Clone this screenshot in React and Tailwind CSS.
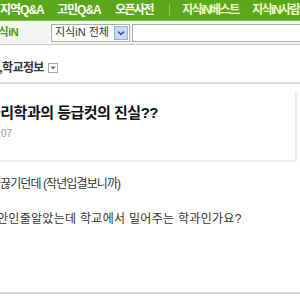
const App = () => {
  return (
    <div className="w-[300px] h-[300px] overflow-hidden bg-white font-['Liberation_Sans','Noto_Sans_CJK_KR',sans-serif]">
      {/* top menu */}
      <div className="h-[21px] bg-[#5ba91b] border-b border-[#7cc23a] flex items-center text-[12px] font-bold text-white whitespace-nowrap tracking-[-1px]">
        <span className="w-[57px] shrink-0">지역Q&amp;A</span>
        <span className="w-[58px] shrink-0">고민Q&amp;A</span>
        <span className="w-[54px] shrink-0 tracking-[-1.5px]">오픈사전</span>
        <span className="w-px h-[12px] bg-[#8fcc55] shrink-0"></span>
        <span className="ml-[12px] w-[70px] shrink-0 text-[#eef8c8] tracking-[-1.5px]">지식iN베스트</span>
        <span className="shrink-0 text-[#eef8c8] tracking-[-1.5px]">지식iN사람들</span>
      </div>

      {/* search row */}
      <div className="h-[24px] bg-[#f4f4f4] border-b border-[#c9c9c9] flex items-center whitespace-nowrap">
        <span className="ml-[-11px] w-[40px] shrink-0 text-[11px] font-bold text-[#4d9a16] tracking-[-0.5px]">지식iN</span>
        <div className="ml-[22px] w-[79px] shrink-0 h-[18px] bg-white border border-[#a7aeb8] flex items-center">
          <span className="flex-1 pl-[3px] text-[11px] text-[#333]">지식iN 전체</span>
          <span className="w-[14px] h-[14px] mr-[1px] bg-[#c9dcf4] border border-[#98b4dd] flex items-center justify-center">
            <svg width="8" height="6" viewBox="0 0 8 6">
              <path d="M1 1.5 L4 4.5 L7 1.5" fill="none" stroke="#2a4f8f" strokeWidth="1.5" />
            </svg>
          </span>
        </div>
        <div className="ml-[2px] flex-1 h-[18px] bg-white border border-[#a7aeb8] mr-[-4px]"></div>
      </div>

      {/* breadcrumb */}
      <div className="h-[39px] pt-[8px] border-b-2 border-[#dcdcdc] flex items-center whitespace-nowrap">
        <span className="ml-[-32px] text-[12px] font-bold text-[#333] tracking-[-0.6px]">대학교,학교정보</span>
        <span className="ml-[4px] w-[10px] h-[10px] border border-[#aaa] flex items-center justify-center">
          <svg width="6" height="4" viewBox="0 0 6 4">
            <path d="M0.5 0.5 L3 3.5 L5.5 0.5 Z" fill="#666" />
          </svg>
        </span>
      </div>

      {/* question card */}
      <div className="mt-[8px] mr-[3px] h-[70px] border-r-2 border-[#ececec] border-b-2 border-b-[#efefef] whitespace-nowrap">
        <div className="pt-[10px] ml-[-13px] text-[15px] font-bold text-[#111] tracking-[-0.5px]">물리학과의 등급컷의 진실??</div>
        <div className="mt-[1px] ml-[-65px] text-[10px] text-[#999]">2011.01.03 16:07</div>
      </div>

      {/* body */}
      <div className="whitespace-nowrap text-[12px] text-[#333]">
        <div className="mt-[13px] tracking-[-0.9px]">끊기던데 (작년입결보니까)</div>
        <div className="mt-[17px] ml-[-3px] tracking-[0.3px]">안인줄알았는데 학교에서 밀어주는 학과인가요?</div>
      </div>

      <div className="mt-[64px] h-[2px] bg-[#d4d4d4]"></div>
    </div>
  )
}

export default App
